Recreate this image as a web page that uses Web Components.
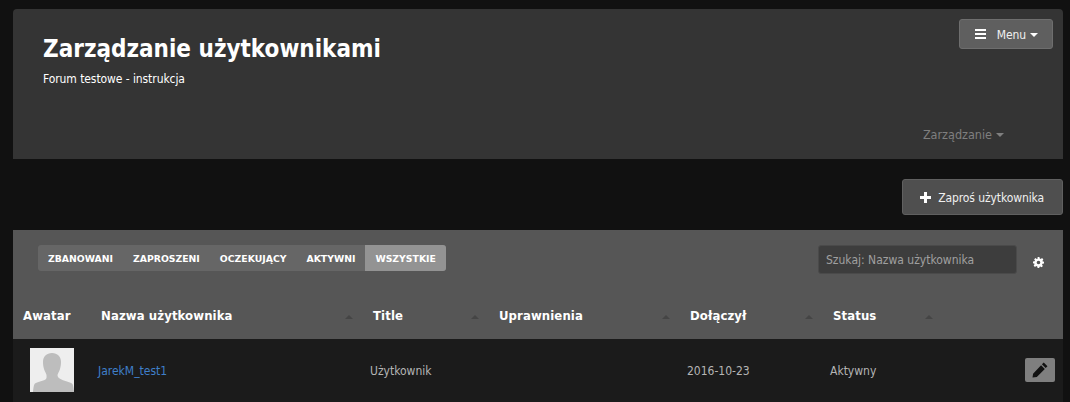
<!DOCTYPE html>
<html lang="pl">
<head>
<meta charset="UTF-8">
<title>Zarządzanie użytkownikami</title>
<style>
  body {
    margin: 0;
    background: #111;
    color: #ddd;
    font-family: "DejaVu Sans Condensed", "DejaVu Sans", sans-serif;
    font-size: 12px;
  }
</style>
</head>
<body>
<user-page>
  <page-header slot="header" heading="Zarządzanie użytkownikami" sub="Forum testowe - instrukcja"></page-header>
  <action-button slot="action" icon="plus">Zaproś użytkownika</action-button>
  <user-table>
    <user-row name="JarekM_test1" title="Użytkownik" joined="2016-10-23" status="Aktywny"></user-row>
  </user-table>
</user-page>

<script>
  const ICONS = {
    bars: '<svg width="11" height="10" viewBox="0 0 11 10"><path fill="currentColor" d="M0 0h11v2H0zM0 4h11v2H0zM0 8h11v2H0z"/></svg>',
    plus: '<svg width="11" height="11" viewBox="0 0 11 11"><path fill="currentColor" d="M4 0h3v4h4v3H7v4H4V7H0V4h4z"/></svg>',
    gear: '<svg width="11" height="11" viewBox="0 0 24 24"><path fill="currentColor" fill-rule="evenodd" d="M10 0h4l.7 3.400 2.200.9L19.800 2.400l2.800 2.800-1.900 2.900.9 2.200L24 10v4l-3.400.7-.9 2.200 1.900 2.900-2.800 2.800-2.900-1.900-2.200.9L14 24h-4l-.7-3.400-2.200-.9-2.900 1.900-2.800-2.800 1.900-2.900-.9-2.200L0 14v-4l3.400-.7.9-2.200L2.400 5.200l2.800-2.800 2.900 1.900 2.200-.9zM12 8a4 4 0 1 0 0 8 4 4 0 0 0 0-8z"/></svg>',
    pencil: '<svg width="16" height="16" viewBox="0 0 15 15"><path fill="currentColor" d="M11 .5l3.500 3.500-1.700 1.700-3.500-3.500zM8.500 3l3.500 3.500-7.500 7.500L.5 14.500 1 11z"/></svg>'
  };

  class UserPage extends HTMLElement {
    constructor() {
      super();
      this.attachShadow({ mode: 'open' });
      this.shadowRoot.innerHTML = `
        <style>
          :host { display: block; padding: 9px 7px 0 13px; height: 393px; overflow: hidden; }
          .actions { display: flex; justify-content: flex-end; padding: 20px 0 15px; }
        </style>
        <slot name="header"></slot>
        <div class="actions"><slot name="action"></slot></div>
        <slot></slot>
      `;
    }
  }

  class PageHeader extends HTMLElement {
    constructor() {
      super();
      this.attachShadow({ mode: 'open' });
      this.shadowRoot.innerHTML = `
        <style>
          :host {
            display: grid;
            grid-template-columns: 1fr auto;
            grid-template-rows: 1fr auto;
            height: 150px;
            box-sizing: border-box;
            padding: 10px 10px 0 30px;
            background: #343434;
            border-radius: 4px 4px 0 0;
          }
          .titles { padding-top: 15px; }
          h1 {
            margin: 0;
            font: bold 24px/30px "DejaVu Sans Condensed", "DejaVu Sans", sans-serif;
            color: #fff;
          }
          p { margin: 7px 0 0; color: #fff; font-size: 12px; line-height: 16px; letter-spacing: -0.08px; }
          .tools { grid-column: 2; }
          .manage {
            grid-column: 1 / 3;
            justify-self: end;
            display: flex;
            align-items: center;
            gap: 4px;
            margin: 0 49px 16px 0;
            color: #7f7f7f;
            font-size: 12.5px;
            line-height: 17px;
          }
          .caret { border: 4px solid transparent; border-top-color: #7f7f7f; border-bottom: 0; }
        </style>
        <div class="titles">
          <h1></h1>
          <p></p>
        </div>
        <div class="tools"><action-button icon="bars" caret compact>Menu</action-button></div>
        <div class="manage">Zarządzanie <span class="caret"></span></div>
      `;
      this.shadowRoot.querySelector('h1').textContent = this.getAttribute('heading');
      this.shadowRoot.querySelector('p').textContent = this.getAttribute('sub');
    }
  }

  class ActionButton extends HTMLElement {
    constructor() {
      super();
      this.attachShadow({ mode: 'open' });
      const caret = this.hasAttribute('caret') ? '<span class="caret"></span>' : '';
      this.shadowRoot.innerHTML = `
        <style>
          :host {
            display: inline-flex;
            align-items: center;
            box-sizing: border-box;
            height: 36px;
            padding: 0 18px 0 17px;
            gap: 7px;
            background: #4f4f4f;
            border: 1px solid #606060;
            border-radius: 3px;
            color: #f0f0f0;
            font-size: 12px;
            letter-spacing: -0.1px;
          }
          :host([compact]) {
            height: 30px;
            padding: 0 14px 0 15px;
            gap: 11px;
            background: #5f5f5f;
            border-color: #6e6e6e;
          }
          .icon { display: flex; color: #fff; }
          .label { display: inline-flex; align-items: center; gap: 4px; padding-top: 1px; }
          .caret { border: 4px solid transparent; border-top-color: #fff; border-bottom: 0; }
        </style>
        <span class="icon">${ICONS[this.getAttribute('icon')]}</span>
        <span class="label"><span><slot></slot></span>${caret}</span>
      `;
    }
  }

  class FilterTabs extends HTMLElement {
    constructor() {
      super();
      this.attachShadow({ mode: 'open' });
      const tabs = ['Zbanowani', 'Zaproszeni', 'Oczekujący', 'Aktywni', 'Wszystkie'];
      this.shadowRoot.innerHTML = `
        <style>
          :host {
            display: inline-flex;
            height: 26px;
            background: #666;
            border-radius: 3px;
            overflow: hidden;
          }
          a {
            display: flex;
            align-items: center;
            padding: 0 10px;
            font: bold 9.3px "DejaVu Sans", sans-serif;
            text-transform: uppercase;
            color: #fff;
          }
          a.active { background: #939393; }
        </style>
        ${tabs.map(t => `<a class="${t === 'Wszystkie' ? 'active' : ''}">${t}</a>`).join('')}
      `;
    }
  }

  class UserTable extends HTMLElement {
    constructor() {
      super();
      this.attachShadow({ mode: 'open' });
      const cols = ['Awatar', 'Nazwa użytkownika', 'Title', 'Uprawnienia', 'Dołączył', 'Status'];
      this.shadowRoot.innerHTML = `
        <style>
          :host { display: block; background: #1b1b1b; }
          .panel { background: #565656; }
          .toolbar {
            display: flex;
            align-items: flex-start;
            padding: 15px 0 0 25px;
            height: 50px;
          }
          .search {
            margin-left: auto;
            box-sizing: border-box;
            width: 199px;
            height: 29px;
            padding: 1px 7px 0;
            display: flex;
            align-items: center;
            background: #3d3d3d;
            border: 1px solid #4a4a4a;
            border-radius: 3px;
            color: #a0a0a0;
            font-size: 12px;
          }
          .gear { display: flex; color: #fff; padding: 12px 19px 0 16px; }
          .head {
            display: grid;
            grid-template-columns: var(--cols);
            height: 44px;
            align-items: center;
          }
          .th {
            display: flex;
            align-items: center;
            justify-content: space-between;
            padding: 0 10px 4px;
            font: bold 13px "DejaVu Sans Condensed", "DejaVu Sans", sans-serif;
            letter-spacing: 0.1px;
            color: #fff;
          }
          .th i { margin-top: 4px; border: 4px solid transparent; border-bottom-color: #454545; border-top: 0; }
          .th:first-child i { display: none; }
        </style>
        <div class="panel">
          <div class="toolbar">
            <filter-tabs></filter-tabs>
            <div class="search">Szukaj: Nazwa użytkownika</div>
            <div class="gear">${ICONS.gear}</div>
          </div>
          <div class="head">
            ${cols.map(c => `<div class="th">${c}<i></i></div>`).join('')}
          </div>
        </div>
        <slot></slot>
      `;
      this.style.setProperty('--cols', '78px 272px 126px 191px 143px 120px 1fr');
    }
  }

  class UserRow extends HTMLElement {
    constructor() {
      super();
      this.attachShadow({ mode: 'open' });
      const a = n => this.getAttribute(n);
      this.shadowRoot.innerHTML = `
        <style>
          :host {
            display: grid;
            grid-template-columns: var(--cols);
            height: 62px;
            padding-bottom: 1px;
            align-items: center;
            color: #b5b5b5;
            font-size: 12px;
          }
          .cell { padding: 1px 0 0 7px; }
          .avatar { padding: 0; display: flex; justify-content: center; }
          .name { color: #3f7fc9; }
          .edit { display: flex; justify-content: flex-end; padding: 0 8px 0 0; }
          .edit span {
            display: flex;
            align-items: center;
            justify-content: center;
            width: 30px;
            height: 24px;
            background: #7f7f7f;
            border-radius: 2px;
            color: #111;
          }
        </style>
        <div class="cell avatar">
          <svg width="44" height="44" viewBox="0 0 44 44">
            <rect width="44" height="44" fill="#eee"/>
            <path fill="#bdbdbd" d="M22 5c5.500 0 9 3.500 9 9 0 3-.5 5-1 7-.5 2-2 4-2.500 6 0 2 1 3 4 4.500 4 1.800 9 2.500 11 4.500 .8 1.500 1.200 4.500 1.500 8H3c.3-3.500.7-6.500 1.500-8 2-2 7-2.700 11-4.500 1.500-1.500 1-2.500 1-4.500-.5-2-2-4-2.500-6-.5-2-1-4-1-7 0-5.500 3.500-9 9-9z"/>
          </svg>
        </div>
        <div class="cell name">${a('name')}</div>
        <div class="cell">${a('title')}</div>
        <div class="cell"></div>
        <div class="cell">${a('joined')}</div>
        <div class="cell">${a('status')}</div>
        <div class="cell edit"><span>${ICONS.pencil}</span></div>
      `;
    }
  }

  customElements.define('action-button', ActionButton);
  customElements.define('filter-tabs', FilterTabs);
  customElements.define('page-header', PageHeader);
  customElements.define('user-row', UserRow);
  customElements.define('user-table', UserTable);
  customElements.define('user-page', UserPage);
</script>
</body>
</html>
